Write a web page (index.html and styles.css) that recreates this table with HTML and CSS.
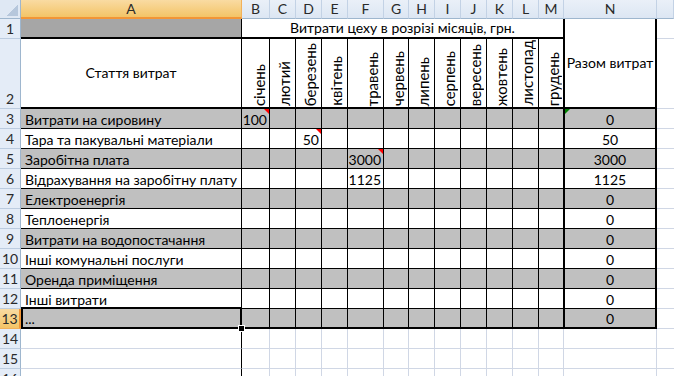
FILE: index.html
```html
<!DOCTYPE html>
<html lang="uk">
<head>
<meta charset="utf-8">
<title>Витрати цеху</title>
<link rel="stylesheet" href="styles.css">
</head>
<body>
<div class="sheet">
  <!-- column headers -->
  <div class="corner"><span class="tri"></span></div>
  <div class="ch sel">A</div><div class="ch">B</div><div class="ch">C</div><div class="ch">D</div><div class="ch">E</div><div class="ch">F</div><div class="ch">G</div><div class="ch">H</div><div class="ch">I</div><div class="ch">J</div><div class="ch">K</div><div class="ch">L</div><div class="ch">M</div><div class="ch">N</div><div class="ch"></div>

  <!-- row 1 -->
  <div class="rh">1</div><div class="a1"></div><div class="title">Витрати цеху в розрізі місяців, грн.</div><div class="ntitle">Разом витрат</div><div class="o"></div>

  <!-- row 2 -->
  <div class="rh">2</div><div class="a2">Стаття витрат</div>
  <div class="mh mb"><span>січень</span></div><div class="mh"><span>лютий</span></div><div class="mh"><span>березень</span></div><div class="mh"><span>квітень</span></div><div class="mh mf"><span>травень</span></div><div class="mh"><span>червень</span></div><div class="mh"><span>липень</span></div><div class="mh"><span>серпень</span></div><div class="mh"><span>вересень</span></div><div class="mh"><span>жовтень</span></div><div class="mh"><span>листопад</span></div><div class="mh"><span>грудень</span></div>
  <div class="o"></div>

  <!-- row 3 -->
  <div class="rh">3</div><div class="a gray">Витрати на сировину</div>
  <div class="m gray cm">100</div><div class="m gray"></div><div class="m gray"></div><div class="m gray"></div><div class="m gray"></div><div class="m gray"></div><div class="m gray"></div><div class="m gray"></div><div class="m gray"></div><div class="m gray"></div><div class="m gray"></div><div class="m gray"></div>
  <div class="n gray err">0</div><div class="o"></div>

  <!-- row 4 -->
  <div class="rh">4</div><div class="a">Тара та пакувальні матеріали</div>
  <div class="m"></div><div class="m"></div><div class="m cm">50</div><div class="m"></div><div class="m"></div><div class="m"></div><div class="m"></div><div class="m"></div><div class="m"></div><div class="m"></div><div class="m"></div><div class="m"></div>
  <div class="n">50</div><div class="o"></div>

  <!-- row 5 -->
  <div class="rh">5</div><div class="a gray">Заробітна плата</div>
  <div class="m gray"></div><div class="m gray"></div><div class="m gray"></div><div class="m gray"></div><div class="m gray cm">3000</div><div class="m gray"></div><div class="m gray"></div><div class="m gray"></div><div class="m gray"></div><div class="m gray"></div><div class="m gray"></div><div class="m gray"></div>
  <div class="n gray">3000</div><div class="o"></div>

  <!-- row 6 -->
  <div class="rh">6</div><div class="a">Відрахування на заробітну плату</div>
  <div class="m"></div><div class="m"></div><div class="m"></div><div class="m"></div><div class="m">1125</div><div class="m"></div><div class="m"></div><div class="m"></div><div class="m"></div><div class="m"></div><div class="m"></div><div class="m"></div>
  <div class="n">1125</div><div class="o"></div>

  <!-- row 7 -->
  <div class="rh">7</div><div class="a gray">Електроенергія</div>
  <div class="m gray"></div><div class="m gray"></div><div class="m gray"></div><div class="m gray"></div><div class="m gray"></div><div class="m gray"></div><div class="m gray"></div><div class="m gray"></div><div class="m gray"></div><div class="m gray"></div><div class="m gray"></div><div class="m gray"></div>
  <div class="n gray">0</div><div class="o"></div>

  <!-- row 8 -->
  <div class="rh">8</div><div class="a">Теплоенергія</div>
  <div class="m"></div><div class="m"></div><div class="m"></div><div class="m"></div><div class="m"></div><div class="m"></div><div class="m"></div><div class="m"></div><div class="m"></div><div class="m"></div><div class="m"></div><div class="m"></div>
  <div class="n">0</div><div class="o"></div>

  <!-- row 9 -->
  <div class="rh">9</div><div class="a gray">Витрати на водопостачання</div>
  <div class="m gray"></div><div class="m gray"></div><div class="m gray"></div><div class="m gray"></div><div class="m gray"></div><div class="m gray"></div><div class="m gray"></div><div class="m gray"></div><div class="m gray"></div><div class="m gray"></div><div class="m gray"></div><div class="m gray"></div>
  <div class="n gray">0</div><div class="o"></div>

  <!-- row 10 -->
  <div class="rh">10</div><div class="a">Інші комунальні послуги</div>
  <div class="m"></div><div class="m"></div><div class="m"></div><div class="m"></div><div class="m"></div><div class="m"></div><div class="m"></div><div class="m"></div><div class="m"></div><div class="m"></div><div class="m"></div><div class="m"></div>
  <div class="n">0</div><div class="o"></div>

  <!-- row 11 -->
  <div class="rh">11</div><div class="a gray">Оренда приміщення</div>
  <div class="m gray"></div><div class="m gray"></div><div class="m gray"></div><div class="m gray"></div><div class="m gray"></div><div class="m gray"></div><div class="m gray"></div><div class="m gray"></div><div class="m gray"></div><div class="m gray"></div><div class="m gray"></div><div class="m gray"></div>
  <div class="n gray">0</div><div class="o"></div>

  <!-- row 12 -->
  <div class="rh">12</div><div class="a">Інші витрати</div>
  <div class="m"></div><div class="m"></div><div class="m"></div><div class="m"></div><div class="m"></div><div class="m"></div><div class="m"></div><div class="m"></div><div class="m"></div><div class="m"></div><div class="m"></div><div class="m"></div>
  <div class="n">0</div><div class="o"></div>

  <!-- row 13 -->
  <div class="rh sel">13</div><div class="a gray last selcell">...</div>
  <div class="m gray last"></div><div class="m gray last"></div><div class="m gray last"></div><div class="m gray last"></div><div class="m gray last"></div><div class="m gray last"></div><div class="m gray last"></div><div class="m gray last"></div><div class="m gray last"></div><div class="m gray last"></div><div class="m gray last"></div><div class="m gray last"></div>
  <div class="n gray last">0</div><div class="o"></div>

  <!-- row 14 -->
  <div class="rh">14</div><div class="e ablack"></div>
  <div class="e"></div><div class="e"></div><div class="e"></div><div class="e"></div><div class="e"></div><div class="e"></div><div class="e"></div><div class="e"></div><div class="e"></div><div class="e"></div><div class="e"></div><div class="e"></div>
  <div class="e"></div><div class="o"></div>

  <!-- row 15 -->
  <div class="rh">15</div><div class="e ablack"></div>
  <div class="e"></div><div class="e"></div><div class="e"></div><div class="e"></div><div class="e"></div><div class="e"></div><div class="e"></div><div class="e"></div><div class="e"></div><div class="e"></div><div class="e"></div><div class="e"></div>
  <div class="e"></div><div class="o"></div>

  <!-- row 16 -->
  <div class="rh">16</div><div class="e ablack"></div>
  <div class="e"></div><div class="e"></div><div class="e"></div><div class="e"></div><div class="e"></div><div class="e"></div><div class="e"></div><div class="e"></div><div class="e"></div><div class="e"></div><div class="e"></div><div class="e"></div>
  <div class="e"></div><div class="o"></div>
</div>
</body>
</html>
```

FILE: styles.css
```css
html, body {
  margin: 0;
  padding: 0;
}
body {
  width: 674px;
  height: 376px;
  overflow: hidden;
  background: #ffffff;
  font-family: Lato, "Liberation Sans", sans-serif;
}
.sheet {
  display: grid;
  grid-template-columns: 21px 221px 28px 26px 26px 26px 36px 25px 26px 26px 26px 26px 26px 25px 93px 17px;
  grid-template-rows: 19px 20px 70px repeat(14, 20px);
  font-size: 14px;
  line-height: 16px;
  color: #000;
  height: 376px;
  overflow: hidden;
}
.sheet > div {
  box-sizing: border-box;
  white-space: nowrap;
}

/* headers */
.corner {
  background: #dfe8f4;
  border-right: 1px solid #9eb6ce;
  border-bottom: 1px solid #9eb6ce;
  display: flex;
  justify-content: flex-end;
  align-items: flex-end;
  padding: 0 2px 2px 0;
}
.tri {
  width: 11px;
  height: 11px;
  background: linear-gradient(to bottom right, transparent 50%, #b6c7dc 50%);
}
.ch {
  background: linear-gradient(to bottom, #eaf0f8, #dce6f3);
  border-right: 1px solid #c3d2e5;
  border-bottom: 1px solid #9eb6ce;
  display: flex;
  justify-content: center;
  align-items: center;
  color: #2a2a2a;
  overflow: hidden;
}
.ch.sel {
  background: linear-gradient(to bottom, #f9dba2, #f3c467);
  border-bottom: 2px solid #f29536;
  border-right-color: #f2b15a;
}
.rh {
  background: #e4ecf7;
  border-right: 1px solid #9eb6ce;
  border-bottom: 1px solid #bccce0;
  display: flex;
  justify-content: center;
  align-items: flex-end;
  color: #2a2a2a;
  padding-bottom: 1px;
}
.rh.sel {
  background: linear-gradient(to bottom, #f9dba2, #f3c467);
  border-right: 2px solid #f29536;
  border-bottom-color: #f2b15a;
}

/* title rows */
.a1 {
  background: #a6a6a6;
  border-right: 1px solid #000;
  border-bottom: 2px solid #000;
}
.title {
  grid-column: span 12;
  border-right: 1px solid #000;
  border-bottom: 2px solid #000;
  display: flex;
  justify-content: center;
  align-items: flex-end;
  padding-bottom: 1px;
}
.ntitle {
  grid-row: span 2;
  border-left: 1px solid #000;
  border-right: 2px solid #000;
  border-bottom: 2px solid #000;
  display: flex;
  justify-content: center;
  align-items: center;
}
.a2 {
  border-right: 1px solid #000;
  border-bottom: 2px solid #000;
  display: flex;
  justify-content: center;
  align-items: center;
}
.mh {
  border-right: 1px solid #000;
  border-bottom: 2px solid #000;
  display: flex;
  justify-content: center;
  align-items: flex-end;
  padding: 0 0 1px 3px;
}
.mh span {
  writing-mode: vertical-rl;
  transform: rotate(180deg);
  font-size: 15px;
  line-height: 16px;
}
.mh.mb { padding-left: 6px; }
.mh.mf { padding-left: 12px; }

/* data cells */
.a {
  border-right: 1px solid #000;
  border-bottom: 1px solid #000;
  display: flex;
  align-items: flex-end;
  padding-left: 4px;
}
.m {
  border-right: 1px solid #000;
  border-bottom: 1px solid #000;
  display: flex;
  justify-content: flex-end;
  align-items: flex-end;
  padding-right: 2px;
}
.n {
  border-left: 1px solid #000;
  border-right: 2px solid #000;
  border-bottom: 1px solid #000;
  display: flex;
  justify-content: center;
  align-items: flex-end;
}
.gray { background: #c0c0c0; }
.last { border-bottom-width: 2px; }
.o {
  border-bottom: 1px solid #d0d7e5;
}
.e {
  border-right: 1px solid #d0d7e5;
  border-bottom: 1px solid #d0d7e5;
}
.e.ablack { border-right-color: #000; }

/* comment / error indicators */
.cm { position: relative; }
.cm::after {
  content: "";
  position: absolute;
  top: 0;
  right: 0;
  border-top: 5px solid #ff0000;
  border-left: 5px solid transparent;
}
.err { position: relative; }
.err::before {
  content: "";
  position: absolute;
  top: 0;
  left: 0;
  border-top: 5px solid #008000;
  border-right: 5px solid transparent;
}

/* active cell selection */
.selcell { position: relative; }
.selcell::after {
  content: "";
  position: absolute;
  top: -2px;
  left: 0;
  right: -1px;
  bottom: -2px;
  border: 2px solid #000;
}
.selcell::before {
  content: "";
  position: absolute;
  right: -4px;
  bottom: -5px;
  width: 5px;
  height: 5px;
  background: #000;
  border: 1px solid #fff;
  z-index: 2;
}
```
